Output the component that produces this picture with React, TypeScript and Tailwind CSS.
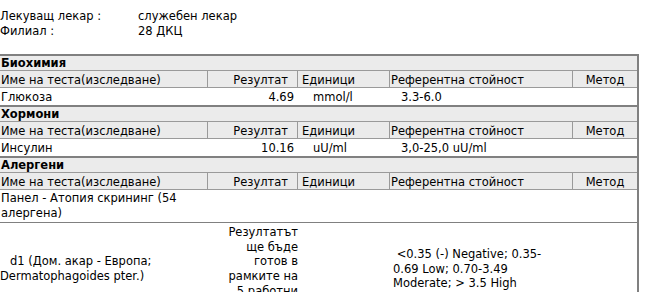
const grid = "grid grid-cols-[208px_90px_92px_183px_64px]";

type Result = {
  name: string;
  result: string;
  unit: string;
  range: string;
};

const sections: { title: string; rows: Result[] }[] = [
  {
    title: "Биохимия",
    rows: [{ name: "Глюкоза", result: "4.69", unit: "mmol/l", range: "3.3-6.0" }],
  },
  {
    title: "Хормони",
    rows: [{ name: "Инсулин", result: "10.16", unit: "uU/ml", range: "3,0-25,0 uU/ml" }],
  },
];

function SectionHead({ title }: { title: string }) {
  return (
    <>
      <div className="h-[15px] border-b border-[#9a9a9a] bg-[#ebebeb] pl-px pt-px font-bold leading-[13px]">
        {title}
      </div>
      <div className={`${grid} h-[17px] border-b border-[#9a9a9a] bg-[#ebebeb] leading-[15px]`}>
        <div className="border-r border-[#9a9a9a] pl-px pt-[2px]">Име на теста(изследване)</div>
        <div className="border-r border-[#9a9a9a] pr-[9px] pt-[2px] text-right">Резултат</div>
        <div className="border-r border-[#9a9a9a] pl-[4px] pt-[2px]">Единици</div>
        <div className="border-r border-[#9a9a9a] pl-px pt-[2px]">Референтна стойност</div>
        <div className="pt-[2px] text-center">Метод</div>
      </div>
    </>
  );
}

export default function App() {
  return (
    <div className="min-h-screen bg-white font-['DejaVu_Sans',sans-serif] text-[11.5px] text-black">
      <div className="grid grid-cols-[138px_1fr] pt-[9px] leading-[14.5px]">
        <div>Лекуващ лекар :</div>
        <div>служебен лекар</div>
        <div>Филиал :</div>
        <div>28 ДКЦ</div>
      </div>

      <div className="mt-[16px] w-[639px] border-r-2 border-[#808080]">
        {sections.map((s) => (
          <div key={s.title} className="border-t-2 border-[#808080]">
            <SectionHead title={s.title} />
            {s.rows.map((r) => (
              <div key={r.name} className={`${grid} h-[17px] pt-px leading-[16px]`}>
                <div className="pl-px">{r.name}</div>
                <div className="pr-[4px] text-right">{r.result}</div>
                <div className="pl-[15px]">{r.unit}</div>
                <div className="pl-[11px]">{r.range}</div>
                <div />
              </div>
            ))}
          </div>
        ))}

        <div className="border-t-2 border-[#808080]">
          <SectionHead title="Алергени" />
          <div className={`${grid} h-[33px] items-center border-b border-[#808080] leading-[14.7px]`}>
            <div className="pl-px">Панел - Атопия скрининг (54 алергена)</div>
          </div>
          <div className={`${grid} items-center py-[2px] leading-[14.7px]`}>
            <div className="indent-[10px]">d1 (Дом. акар - Европа; Dermatophagoides pter.)</div>
            <div className="pl-[12px] text-right">Резултатът ще бъде готов в рамките на 5 работни дни.</div>
            <div />
            <div className="pl-[3px] pr-[24px]">&nbsp;&lt;0.35 (-) Negative; 0.35-0.69 Low; 0.70-3.49 Moderate; &gt; 3.5 High</div>
            <div />
          </div>
        </div>
      </div>
    </div>
  );
}
